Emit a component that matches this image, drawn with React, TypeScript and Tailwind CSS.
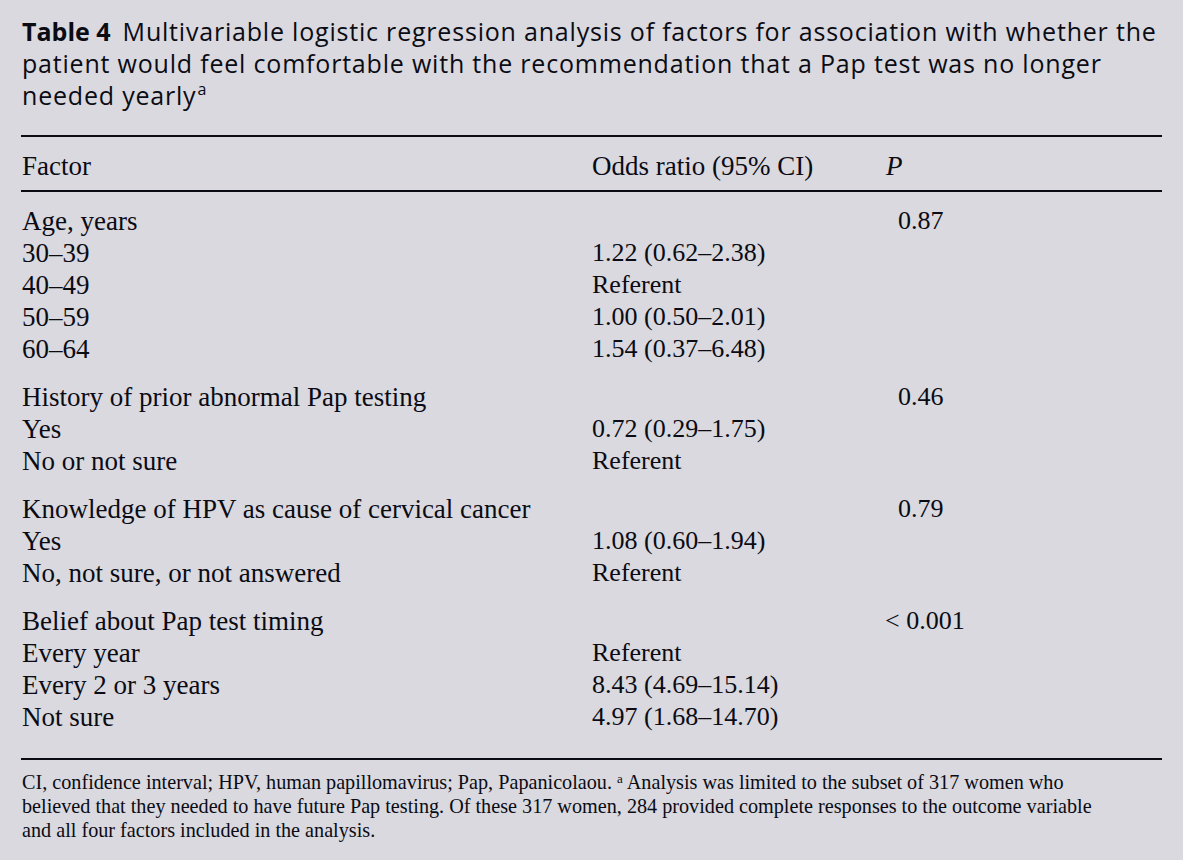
const groups = [
  {
    label: "Age, years",
    p: "0.87",
    rows: [
      ["30–39", "1.22 (0.62–2.38)"],
      ["40–49", "Referent"],
      ["50–59", "1.00 (0.50–2.01)"],
      ["60–64", "1.54 (0.37–6.48)"],
    ],
  },
  {
    label: "History of prior abnormal Pap testing",
    p: "0.46",
    rows: [
      ["Yes", "0.72 (0.29–1.75)"],
      ["No or not sure", "Referent"],
    ],
  },
  {
    label: "Knowledge of HPV as cause of cervical cancer",
    p: "0.79",
    rows: [
      ["Yes", "1.08 (0.60–1.94)"],
      ["No, not sure, or not answered", "Referent"],
    ],
  },
  {
    label: "Belief about Pap test timing",
    p: "< 0.001",
    rows: [
      ["Every year", "Referent"],
      ["Every 2 or 3 years", "8.43 (4.69–15.14)"],
      ["Not sure", "4.97 (1.68–14.70)"],
    ],
  },
];

export default function App() {
  return (
    <main className="min-h-screen bg-[#d9d9df] text-[#0b0b14] px-[21px] pt-[15px]">
      {/* TITLE */}
      <h1 className="font-['Open_Sans','Noto_Sans',sans-serif] text-[25px] leading-[32px] tracking-[0.8px] pl-px whitespace-nowrap">
        <span className="font-bold tracking-normal">Table 4</span>
        <span className="ml-3">Multivariable logistic regression analysis of factors for association with whether the</span>
        <br />
        patient would feel comfortable with the recommendation that a Pap test was no longer
        <br />
        needed yearly
        <span className="text-[16px] leading-none relative -top-[10px] ml-px">a</span>
      </h1>

      {/* TABLE */}
      <section className="mt-6 font-['Liberation_Serif','Times_New_Roman',serif] text-[27px] leading-[32px]">
        <div className="border-t-2 border-[#0b0b14]" />

        <div className="grid grid-cols-[570px_294px_1fr] pt-[13px] pb-2 pl-px">
          <div>Factor</div>
          <div>Odds ratio (95% CI)</div>
          <div className="italic">P</div>
        </div>

        <div className="border-t-2 border-[#0b0b14]" />

        <div className="pt-[13px] pb-[25px] pl-px flex flex-col gap-4">
          {groups.map((group, i) => (
            <div key={i}>
              <div className="grid grid-cols-[570px_294px_1fr]">
                <div>{group.label}</div>
                <div />
                <div className={group.p.startsWith("<") ? "text-[26px] -ml-px" : "text-[26px] pl-3"}>
                  {group.p}
                </div>
              </div>
              {group.rows.map((row, j) => (
                <div key={j} className="grid grid-cols-[570px_294px_1fr]">
                  <div>{row[0]}</div>
                  <div className="text-[26px]">{row[1]}</div>
                  <div />
                </div>
              ))}
            </div>
          ))}
        </div>

        <div className="border-t-2 border-[#0b0b14]" />
      </section>

      {/* NOTES */}
      <p className="pt-[10px] pl-px font-['Liberation_Serif','Times_New_Roman',serif] text-[20.2px] leading-[24px] whitespace-nowrap">
        CI, confidence interval; HPV, human papillomavirus; Pap, Papanicolaou.{" "}
        <sup className="text-[13px]">a</sup> Analysis was limited to the subset of 317 women who
        <br />
        believed that they needed to have future Pap testing. Of these 317 women, 284 provided
        complete responses to the outcome variable
        <br />
        and all four factors included in the analysis.
      </p>
    </main>
  );
}
